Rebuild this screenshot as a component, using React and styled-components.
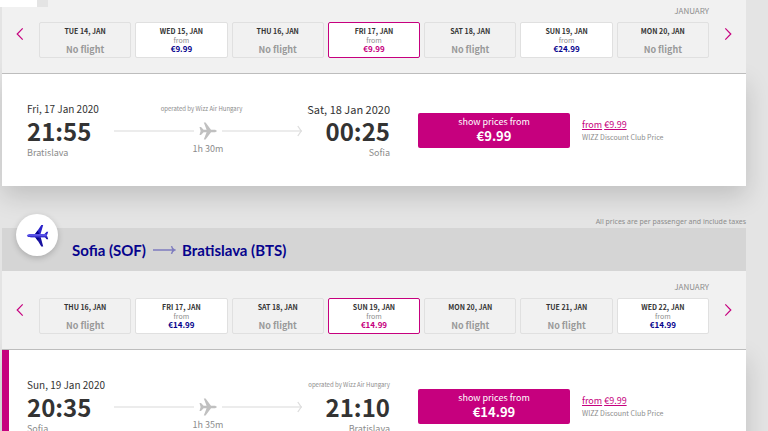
import React, { useState } from "react";
import styled, { createGlobalStyle } from "styled-components";

const outbound = [
  { day: "TUE 14, JAN" },
  { day: "WED 15, JAN", price: "€9.99" },
  { day: "THU 16, JAN" },
  { day: "FRI 17, JAN", price: "€9.99" },
  { day: "SAT 18, JAN" },
  { day: "SUN 19, JAN", price: "€24.99" },
  { day: "MON 20, JAN" },
];

const inbound = [
  { day: "THU 16, JAN" },
  { day: "FRI 17, JAN", price: "€14.99" },
  { day: "SAT 18, JAN" },
  { day: "SUN 19, JAN", price: "€14.99" },
  { day: "MON 20, JAN" },
  { day: "TUE 21, JAN" },
  { day: "WED 22, JAN", price: "€14.99" },
];

const Chevron = ({ flip }) => (
  <svg width="8" height="14" viewBox="0 0 8 14" fill="none" stroke="#c6007e" strokeWidth="1.2">
    <path d={flip ? "M1.3 1.3 L6.8 7 L1.3 12.7" : "M6.7 1.3 L1.2 7 L6.7 12.7"} />
  </svg>
);

const PlaneRight = () => (
  <svg width="18" height="18" viewBox="0 0 18 18" fill="#c0c0c0">
    <path d="M0.5 5 H2 L4.6 7.7 H7.6 L4.8 0.6 H6.6 L12 7.7 H15 C16.6 7.7 17.8 8.4 17.8 9 C17.8 9.6 16.6 10.3 15 10.3 H12 L6.6 17.4 H4.8 L7.6 10.3 H4.6 L2 13 H0.5 L1.6 9 Z" />
  </svg>
);

const PlaneLeft = () => (
  <svg width="23" height="23" viewBox="0 0 23 23">
    <path d="M9 10.5 L15.3 1 H17.2 L14.4 10.5 Z M18 10.5 L20.6 7.8 H22.2 L20.9 11.5 Z" fill="#2b22c9" />
    <path d="M9 12 L15.3 22.4 H17.2 L14.4 12 Z M18 12 L20.6 15.3 H22.2 L20.9 11.5 Z" fill="#1811a0" />
    <path d="M8.6 10.6 L11.6 6.4 L13.6 10.6 Z M8.6 12.6 L11.6 16.8 L13.6 12.6 Z" fill="#06038d" />
    <path d="M0.8 11.6 C1.6 10.4 3.2 10 5 10 H20.6 V13.2 H5 C3.2 13.2 1.6 12.8 0.8 11.6 Z" fill="#5750e6" />
    <path d="M1.2 12 H20.6 V13.2 H5 C3.2 13.2 1.8 12.8 1.2 12 Z" fill="#3931cf" />
  </svg>
);

const RouteArrow = () => (
  <svg width="24" height="10" viewBox="0 0 24 10" fill="none" stroke="#7d7bbf" strokeWidth="1.4">
    <path d="M1 5 H22.5 M19.5 1.2 Q20 4 22.5 5 Q20 6 19.5 8.8" />
  </svg>
);

const ArrowTip = () => (
  <svg width="5" height="12" viewBox="0 0 5 12" fill="none" stroke="#dedede" strokeWidth="1.3">
    <path d="M0.8 1 L4.2 6 L0.8 11" />
  </svg>
);

const DatePicker = ({ slots, initial, compact }) => {
  const [selected, setSelected] = useState(initial);
  return (
    <Dates $compact={compact}>
      <Month>JANUARY</Month>
      <SlotRow>
        <NavButton type="button" aria-label="Previous dates">
          <Chevron />
        </NavButton>
        <Slots>
          {slots.map((slot, i) => (
            <Slot
              key={slot.day}
              type="button"
              disabled={!slot.price}
              $active={i === selected}
              onClick={() => setSelected(i)}
            >
              <Day>{slot.day}</Day>
              <From>{slot.price ? "from" : ""}</From>
              {slot.price ? <Price $active={i === selected}>{slot.price}</Price> : <NoFlight>No flight</NoFlight>}
            </Slot>
          ))}
        </Slots>
        <NavButton type="button" aria-label="Next dates" $end>
          <Chevron flip />
        </NavButton>
      </SlotRow>
    </Dates>
  );
};

const Flight = ({ flight, marked }) => (
  <FlightRow $marked={marked}>
    <Journey>
      <Stop>
        <StopDate>{flight.date}</StopDate>
        <Time>{flight.departs}</Time>
        <City>{flight.from}</City>
      </Stop>
      <Middle>
        <Operator $centered>{flight.arrivalDate ? "operated by Wizz Air Hungary" : ""}</Operator>
        <Track>
          <Line />
          <PlaneRight />
          <Line>
            <ArrowTip />
          </Line>
        </Track>
        <City>{flight.duration}</City>
      </Middle>
      <Stop $end>
        {flight.arrivalDate ? (
          <StopDate $large>{flight.arrivalDate}</StopDate>
        ) : (
          <Operator>operated by Wizz Air Hungary</Operator>
        )}
        <Time>{flight.arrives}</Time>
        <City>{flight.to}</City>
      </Stop>
    </Journey>
    <PriceButton type="button">
      <span>show prices from</span>
      <strong>{flight.price}</strong>
    </PriceButton>
    <Club>
      <ClubLink href="#club">
        <u>from</u> <u>€9.99</u>
      </ClubLink>
      <ClubNote>WIZZ Discount Club Price</ClubNote>
    </Club>
  </FlightRow>
);

const App = () => {
  return (
    <>
      <GlobalStyle />
      <Page>
        <Tab />
        <section>
          <DatePicker slots={outbound} initial={3} compact />
          <Flight
            flight={{
              date: "Fri, 17 Jan 2020",
              departs: "21:55",
              from: "Bratislava",
              duration: "1h 30m",
              arrivalDate: "Sat, 18 Jan 2020",
              arrives: "00:25",
              to: "Sofia",
              price: "€9.99",
            }}
          />
        </section>
        <Note>All prices are per passenger and include taxes</Note>
        <section>
          <RouteHeader>
            <Badge>
              <PlaneLeft />
            </Badge>
            <RouteTitle>
              Sofia (SOF) <RouteArrow /> Bratislava (BTS)
            </RouteTitle>
          </RouteHeader>
          <DatePicker slots={inbound} initial={3} />
          <Flight
            marked
            flight={{
              date: "Sun, 19 Jan 2020",
              departs: "20:35",
              from: "Sofia",
              duration: "1h 35m",
              arrives: "21:10",
              to: "Bratislava",
              price: "€14.99",
            }}
          />
        </section>
      </Page>
    </>
  );
};

export default App;

const GlobalStyle = createGlobalStyle`
  html {
    scrollbar-width: none;
  }

  body {
    margin: 0;
    background-color: #e4e4e4;
    color: #333333;
    font-family: "Noto Sans CJK SC", "Noto Sans", sans-serif;
  }

  button {
    font-family: inherit;
    cursor: pointer;
  }
`;

const Page = styled.main`
  position: relative;
  padding: 0 22px 0 2px;
`;

/* bottom edge of the tab that hangs over the first panel */
const Tab = styled.div`
  position: absolute;
  z-index: 2;
  top: 0;
  left: 0;
  width: 37px;
  height: 7px;
  background-color: #ffffff;
  border-right: 11px solid #e4e4e4;
`;

const Dates = styled.div`
  position: relative;
  z-index: 1;
  padding: ${props => (props.$compact ? "5px" : "10px")} 0 15px;
  background-color: #f1f1f1;
  border-bottom: 1px solid #bdbdbd;
`;

const Month = styled.div`
  padding-right: 37px;
  margin-bottom: 5px;
  font-size: 8px;
  line-height: 12px;
  text-align: right;
  color: #8c8c8c;
`;

const SlotRow = styled.div`
  display: grid;
  grid-template-columns: 37px 1fr 37px;
`;

const NavButton = styled.button`
  display: flex;
  align-items: center;
  justify-content: ${props => (props.$end ? "flex-end" : "flex-start")};
  padding: 0 14px 12px;
  border: none;
  background: none;
`;

const Slots = styled.div`
  display: grid;
  grid-template-columns: repeat(7, 1fr);
  gap: 4px;
`;

const Slot = styled.button`
  display: grid;
  grid-template-rows: 10px 8px 10px;
  padding: 3px 0;
  border: 1px solid ${props => (props.$active ? "#c6007e" : "#e0e0e0")};
  border-radius: 2px;
  background-color: #ffffff;
  text-align: center;

  &:disabled {
    background-color: #f1f1f1;
    cursor: default;
  }
`;

const Day = styled.span`
  font-size: 7px;
  font-weight: 700;
  line-height: 10px;
  color: #333333;
`;

const From = styled.span`
  font-size: 7px;
  line-height: 8px;
  color: #8c8c8c;
`;

const Price = styled.span`
  font-size: 8px;
  font-weight: 700;
  line-height: 10px;
  color: ${props => (props.$active ? "#c6007e" : "#06038d")};
`;

const NoFlight = styled.span`
  font-size: 9px;
  font-weight: 700;
  line-height: 12px;
  color: #999999;
`;

const FlightRow = styled.article`
  display: grid;
  grid-template-columns: 363fr 180fr 176fr;
  align-items: start;
  padding: 27px 0 25px ${props => (props.$marked ? "18px" : "25px")};
  border-left: ${props => (props.$marked ? "7px solid #c6007e" : "none")};
  background-color: #ffffff;
  box-shadow: 0 10px 24px rgba(0, 0, 0, 0.16);
`;

const Journey = styled.div`
  display: grid;
  grid-template-columns: 87px 1fr 88px;
`;

const Stop = styled.div`
  display: grid;
  grid-template-rows: 16px 28px 16px;
  justify-items: ${props => (props.$end ? "end" : "start")};
  white-space: nowrap;
`;

const StopDate = styled.div`
  font-size: ${props => (props.$large ? "11px" : "10px")};
  line-height: 16px;
`;

const Time = styled.div`
  font-size: 24px;
  font-weight: 700;
  line-height: 28px;
`;

const City = styled.div`
  font-size: 9px;
  line-height: 16px;
  color: #8c8c8c;
`;

const Middle = styled.div`
  display: grid;
  grid-template-rows: 16px 24px 16px;
  justify-items: center;
`;

const Operator = styled.div`
  padding-right: ${props => (props.$centered ? "13px" : "0")};
  font-size: 6px;
  line-height: 16px;
  color: #8c8c8c;
`;

const Track = styled.div`
  display: flex;
  align-items: center;
  justify-self: stretch;
  gap: 5px;
  padding-top: 4px;
`;

const Line = styled.div`
  display: flex;
  flex: 1;
  align-items: center;
  justify-content: flex-end;
  height: 2px;
  background-color: #ececec;

  svg {
    flex: none;
  }
`;

const PriceButton = styled.button`
  display: flex;
  flex-direction: column;
  align-items: center;
  margin: 12px 0 0 28px;
  padding: 2px 0 5px;
  border: none;
  border-radius: 2px;
  background-color: #c6007e;
  color: #ffffff;
  font-size: 9px;
  line-height: 14px;

  strong {
    font-size: 13px;
  }
`;

const Club = styled.div`
  padding: 17px 0 0 12px;
`;

const ClubLink = styled.a`
  display: block;
  font-size: 9px;
  line-height: 13px;
  color: #c6007e;
  text-decoration: none;
`;

const ClubNote = styled.div`
  font-size: 7px;
  line-height: 12px;
  color: #8c8c8c;
`;

const Note = styled.p`
  margin: 0;
  padding-top: 29px;
  font-family: "Noto Sans", sans-serif;
  font-size: 7px;
  line-height: 13px;
  text-align: right;
  color: #8c8c8c;
`;

const RouteHeader = styled.header`
  position: relative;
  z-index: 1;
  padding: 12px 0 11px 70px;
  background-color: #d5d5d5;
`;

const Badge = styled.div`
  position: absolute;
  top: -14px;
  left: 14px;
  display: flex;
  align-items: center;
  justify-content: center;
  width: 42px;
  height: 42px;
  border-radius: 50%;
  background-color: #ffffff;
  box-shadow: 0 2px 6px rgba(0, 0, 0, 0.2);
`;

const RouteTitle = styled.h2`
  display: flex;
  align-items: center;
  gap: 6px;
  margin: 0;
  font-family: Lato, sans-serif;
  font-size: 15px;
  font-weight: 700;
  line-height: 20px;
  color: #06038d;
`;
